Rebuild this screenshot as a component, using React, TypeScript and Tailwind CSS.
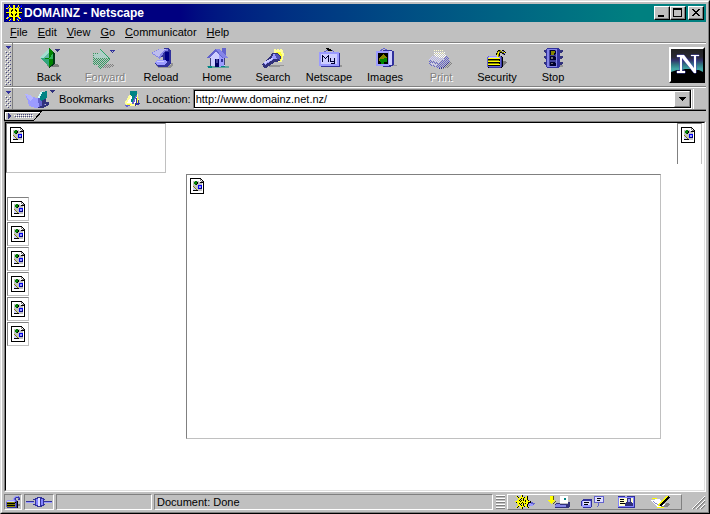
import type { ReactNode } from "react";

const colors: Record<string, string> = {
  k: "#000000",
  w: "#ffffff",
  g: "#c0c0c0",
  d: "#808080",
  b: "#0000ff",
  n: "#000080",
  v: "#008000",
  y: "#ffff00",
  o: "#848400",
  l: "#9c9cff",
  p: "#6363ce",
  i: "#31319c",
  t: "#008080",
  c: "#ceceff",
  e: "#319c63",
  m: "#9cdece",
  f: "#ffffce",
};

// Each character is one pixel, a dot is transparent
function Pixels({ rows }: { rows: string[] }) {
  return (
    <svg width={rows[0].length} height={rows.length} shapeRendering="crispEdges" className="block shrink-0" aria-hidden="true">
      {rows.flatMap((row, y) =>
        row.split("").map((c, x) =>
          colors[c] ? <rect key={`${x}-${y}`} x={x} y={y} width="1" height="1" fill={colors[c]} /> : null
        )
      )}
    </svg>
  );
}

const missingImage = [
  "kkkkkkkkkkk...",
  "kwwwwwwwwwdk..",
  "kwwwwwwwwwdwk.",
  "kwwggvvggwwddk",
  "kwwgvvvkggkkkk",
  "kwwgvvvkggggwk",
  "kwwggvkgggggwk",
  "kwwgggggbbbbwk",
  "kwwoggggbllbwk",
  "kwwcogggbllnwk",
  "kwwccoggbnnnwk",
  "kwwcccogggggwk",
  "kwwkkkkkggggwk",
  "kwwwwwwwwwwwwk",
  "kwwwwwwwwwwwwk",
  "kkkkkkkkkkkkkk",
];

const forward = [
  ".......e................",
  ".......me........iiiii..",
  "........me........i.i...",
  ".......m.me........i....",
  "e.e.e.m.m.me............",
  ".m.m.m.m.m.me...........",
  "e.m.m.m.m.m.me..........",
  ".m.m.m.m.m.m.me.........",
  "e.m.m.m.m.m.m.me........",
  ".e.e.e.e.e.e.e.ee.......",
  "e.e.e.e.e.e.e.e.e.......",
  ".e.e.e.e.e.e.e.e........",
  "e.e.e.e.e.e.e.e.........",
  ".e.e.e.e.e.e.e..........",
  "e.e.e.e.e.e.e...........",
  ".e.e.e.e.e.e.d.d.d.d....",
  "......e.e.e.d.d.d.d.d...",
  ".....e.e.e.d.d.d.d.d....",
  "......e.e.d.d.d.d.......",
  ".......e................",
];

const print = [
  ".....f.f.f.f.f..........",
  "........................",
  ".....w.w.w.w.f.w........",
  "......f.f.f.f.f.........",
  ".....w.w.w.w.w.w........",
  "......w.w.w.w.w.w.......",
  "...c.c.w.w.w.w.w.p......",
  "..c.c.c.c.w.w.w.p.p.....",
  ".c.c.c.c.c.c.c.p.p.p....",
  "c.c.c.c.c.c.c.c.p.p.....",
  ".p.c.c.c.c.c.p.p.p.p....",
  "p.p.p.c.c.c.p.p.p.p.p...",
  ".p.p.p.p.c.p.p.p.p.i.d..",
  "p.c.c.p.p.p.p.p.p.i.d.d.",
  ".p.c.c.c.p.p.p.p.i.d.d..",
  "..p.p.c.p.p.p.p.i.d.d...",
  ".....p.p.p.p.p.i.d.d....",
  "........p.p.i.i.d.d.....",
  "..........i.i.d.........",
];

const lock = [
  "...........kko.kk...",
  "..........koooo.pk..",
  "..........oypkkooyk.",
  ".........koyk..kkp..",
  ".........kyok...pk..",
  "..........yok.......",
  ".pllllllllyoppk.....",
  "plcccccccccclpik....",
  "pyyyyyyyyyyyypik....",
  "pkkkkkkkkkkkkpik....",
  "poooooooooookpik....",
  "pyyyyyyyyyyyypikddd.",
  "pkkkkkkkkkkkkpikdddd",
  "poooooooooookpikddd.",
  "pyyyyyyyyyyyypikdd..",
  "pkkkkkkkkkkkkpikd...",
  "ppppppppppppppik....",
  ".kiiiiiiiiiiiik.....",
];

const smallLock = [
  ".........lllp..",
  "........lpiiip.",
  ".......lpi..pi.",
  ".......lpi..ii.",
  ".llllllllpp....",
  "lccccccclpik...",
  "pooooooookik...",
  "pkkkkkkkkpik...",
  "poooooooopikdd.",
  "pkkkkkkkkpikdd.",
  "poooooooopik...",
  ".iiiiiiiiiik...",
];

const wheel = [
  "......yk............",
  ".yk...yk...yk.......",
  "..yk.yyyyk.yk.......",
  "...yyykykyyyk.......",
  "...yyk.yk.yyk.......",
  "..yykykykykyyk......",
  "yyyyykyyyykyyyyk....",
  ".kyyyyykyyyyykkkpp..",
  "..yykykykykyykllpppp",
  "...yyk.yk.yykpllllp.",
  "...yyykykyyyk.plll..",
  "..yk.yyyyk.yk.......",
  ".yk...yk....yk......",
  "......yk............",
];

const titleWheel = [
  "b..y...yy...y..b",
  "bb.yb..yy..by.bb",
  "..y.yb.yy.by.y..",
  "yybyyyyyyyyyyb.y",
  ".bbyyykyykyyybb.",
  "...yykkyykkyyk..",
  "..byykyyyykyyk..",
  "yyyyyyyyyyyyyyyy",
  "kkkyykyyyykyykkk",
  "..byykkyykkyyk..",
  "..byyykyykyyyb..",
  ".b.yyyyyyyyyy.b.",
  "byybkkkyykkbyyb.",
  "yybb.bkyyk.bbyyb",
  "kb..yb.yyk.yb.kb",
  "b..ybb.yyk.by..b",
];

function Icon({ w = 26, h = 22, children }: { w?: number; h?: number; children: ReactNode }) {
  return (
    <svg width={w} height={h} viewBox={`0 0 ${w} ${h}`} shapeRendering="crispEdges" className="block shrink-0" aria-hidden="true">
      {children}
    </svg>
  );
}

const BackIcon = () => (
  <Icon>
    <path d="M11 16h11v1h1v2H12z" fill="#808080" />
    <path d="m14 1 5 5v10l-6 4z" fill="#003918" />
    <path d="M13 0 4 10l9 9 4-3V4z" fill="#008400" />
    <path d="M13 0 4 10h9z" fill="#a5dece" />
    <path d="M13 4v6H7z" fill="#63b5a5" />
    <path d="m4 10 9 1v8z" fill="#31a57b" />
    <path d="M13 11h4v-6z" fill="#31b55a" />
    <path d="M19 1h5v1h-1v1h-1v1h-1V3h-1V2h-1z" fill="#31317b" />
  </Icon>
);

const ReloadIcon = () => (
  <Icon>
    <path d="M8 17h15v-2h2v3l-3 2H10z" fill="#949494" />
    <path d="M11 1 20 0l3 3v13l-4 3h-9l-4-4 4-3h5v-3h-5L3 5z" fill="#31319c" />
    <path d="M3 5 11 1h8l2 1-5 2-4 7z" fill="#8484e7" />
    <path d="M4 5 12 1h7l-5 3-3 5z" fill="#bdbdef" />
    <path d="M17 4h4v9h-4z" fill="#000084" />
    <path d="m7 14 3-2h7l2 2-2 3H9z" fill="#9c9cff" />
    <path d="M9 13h7v1H9z" fill="#ceceff" />
  </Icon>
);

const HomeIcon = () => (
  <Icon>
    <path d="M2 18h23v2H4z" fill="#63a59c" />
    <path d="M4 18h4v2H4zM17 18h4v1h-4z" fill="#008484" />
    <path d="M6 9 12 4l9 5v9H6z" fill="#ceceff" />
    <path d="m15 7 6 3v7l-6 2z" fill="#9c9cff" />
    <path d="M2 10 11 1l5 5 8 4h-5l-7-6-7 6z" fill="#6363ce" />
    <path d="M12 1h3l9 9h-5z" fill="#8484e7" />
    <path d="M18 0h4v7l-4-3z" fill="#6363ce" />
    <path d="M11 11h4v8h-4z" fill="#000063" />
    <path d="M12 11h2v4h-2z" fill="#42429c" />
    <path d="M17 11h2v3h-2z" fill="#31319c" />
    <path d="M6 10h1v8H6zM20 10h1v7h-1z" fill="#42427b" />
  </Icon>
);

const SearchIcon = () => (
  <Icon>
    <path d="M14 1h2v1h1V1h2v1h1V1h2v1h1v3h1v3h-1v4h-1v2h-7z" fill="#ffff9c" />
    <path d="M16 4h5v2h1v5h-1v2h-5z" fill="#ffff31" />
    <path d="M9 17h15v1h-4v1H9z" fill="#949494" />
    <path d="M2 16 10 9l2-4h6l3 4-1 4-5 1-9 6H4z" fill="#31317b" />
    <path d="m3 15 9-5 1-4 4 1 2 3-5 1-9 6z" fill="#9c9cff" />
    <path d="m4 14 8-4 1 1-8 5z" fill="#ceceff" />
    <path d="M15 6h3l2 3v3l-4-2z" fill="#5252b5" />
  </Icon>
);

const NetscapeIcon = () => (
  <Icon>
    <path d="m7 5 5-3h3l5 3" fill="none" stroke="#6363ce" />
    <path d="M10 0h3v1h2v1h1v1h-4V2h-1V1h-1z" fill="#000000" />
    <path d="M20 17h6v2h-6z" fill="#949494" />
    <path d="M4 5h20v14H5z" fill="#31319c" />
    <path d="M3 4h20v14H3z" fill="#9c9cff" />
    <path d="M5 6h16v10H5z" fill="#ceceff" />
    <path d="M6 14V7h1v1h1v1h1v1h1V9h1V8h1V7h1v7h-1V9h-1v1h-1v1H9v-1H8V9H7v5zM14 10h1v3h3v-3h1v6h-4v-1h3v-1h-4z" fill="#000031" />
  </Icon>
);

const ImagesIcon = () => (
  <Icon>
    <path d="m7 4 5-4 5 4" fill="none" stroke="#6363ce" />
    <path d="M9 18h16v-1h-3z" fill="#949494" />
    <path d="M4 3 18 2l4 1v14l-4 2-14-1z" fill="#31319c" />
    <path d="M4 3h13v15H4z" fill="#9c9cff" />
    <path d="M17 3h3v14h-3z" fill="#ceceff" />
    <path d="M6 5h10v11H6z" fill="#000000" />
    <path d="m7 10 4-4 4 4v3H7z" fill="#848400" />
    <path d="M8 11h4v-1h3v4h-3v2H9z" fill="#008400" />
  </Icon>
);

const StopIcon = () => (
  <Icon>
    <path d="M17 17h6v2h-6z" fill="#949494" />
    <path d="M4 2h19v2h-1v1h-2v2H7V5H5V4H4zM4 8h19v2h-1v1h-2v2H7v-2H5v-1H4zM4 14h19v2h-1v1h-2v2H7v-2H5v-1H4z" fill="#31317b" />
    <path d="M7 0h11l2 1v18l-2 1H8l-2-1V1z" fill="#31319c" />
    <path d="M7 1h10v18H7z" fill="#8484e7" />
    <path d="M9 2h7v16H9z" fill="#42429c" />
    <path d="M10 2h5v1h1v3h-1v1h-5zM10 8h5v1h1v3h-6zM10 14h5v1h1v3h-6z" fill="#000031" />
    <path d="M11 3h4v2h-1v2h-3z" fill="#848400" />
    <path d="M11 9h2v2h-2zM11 15h2v1h-2z" fill="#737373" />
  </Icon>
);

const BookmarksIcon = () => (
  <Icon w={30} h={20}>
    <path d="M13 16h8v-3h3v3l-6 3h-5z" fill="#31317b" />
    <path d="m0 5 6 1 1 2 6 1 1-1v10l-3 1-7-2-1-5z" fill="#9c9cff" />
    <path d="m0 5 6 1 1 2 2 1-4 3z" fill="#b5b5ff" />
    <path d="m13 9 3-3 5 2v7l-7 3z" fill="#6363ce" />
    <path d="m17 10h4v5l-4 1z" fill="#31317b" />
    <path d="m14 6 4-3 4-1v7l-6 3z" fill="#008484" />
    <path d="M13 7h1V5h1V3h2V2h1v1h-1v2h-1v2h-1v2h-2z" fill="#ceffff" />
    <path d="M25 1h5v1h-1v1h-1v1h-1V3h-1V2h-1z" fill="#31317b" />
  </Icon>
);

const LocationIcon = () => (
  <Icon w={18} h={18}>
    <path d="m1 12 5-8h8l1 9-3 3H2z" fill="#ffff9c" />
    <path d="m3 13 4-7 6 1-1 6z" fill="#ffffff" />
    <path d="M6 1h7v3l-2 6-3 3-1-1 1-6-2-1z" fill="#008484" />
    <path d="m8 13 4-8 1 1-4 9zM1 15h5v1l-4 1z" fill="#6363ce" />
    <path d="m13 5 3 9-5 2z" fill="#31319c" />
    <path d="M13 7h1v6h-1zM3 14h4v1H3z" fill="#ffff31" />
  </Icon>
);

const MailIcon = () => (
  <Icon w={24} h={14}>
    <path d="M3 1h3v4h2v1H7v1H6v1H5v1H4V8H3V7H2V6H1V5h2z" fill="#ffff00" />
    <path d="M6 1h1v4H6zM8 6h1v1H8zM7 7h1v1H7zM6 8h1v1H6z" fill="#636300" />
    <path d="M13 1h8v7h-8z" fill="#ffffff" />
    <path d="M17 3h2v2h-2z" fill="#008484" />
    <path d="M9 8h4v1h8V7h2v4l-2 2H8v-3z" fill="#31317b" />
    <path d="M9 9h4v1h6v2H8z" fill="#8484e7" />
  </Icon>
);

const ChatIcon = () => (
  <Icon w={24} h={14}>
    <path d="M2 4h9v7l-2 2H2l-2-2V6z" fill="#31319c" />
    <path d="M1 6h9v6H1z" fill="#9c9cff" />
    <path d="M2 6h7v4H2zM14 2h8v5h-8z" fill="#dedeff" />
    <path d="M13 1h10v7h-5v3h-1v1h-1v-1h1V8h-4zm1 1v5h8V2z" fill="#6363ce" fillRule="evenodd" />
    <path d="M3 7h5v1H3zM3 9h4v1H3zM16 3h4v1h-4zM16 5h3v1h-3z" fill="#000000" />
  </Icon>
);

const AddressIcon = () => (
  <Icon w={18} h={14}>
    <path d="M0 1h7v1h2V1h8v12H0z" fill="#31319c" />
    <path d="M0 2h16v10H0z" fill="#8484ff" />
    <path d="M1 3h14v8H1z" fill="#ffffce" />
    <path d="M2 4h4v1H2zM2 6h4v1H2zM2 8h5v1H2z" fill="#000000" />
    <path d="M9 3h4v4h1v1h1v3H7V8h1V7h1z" fill="#31317b" />
    <path d="M10 4h2v3h-2z" fill="#9c9cff" />
  </Icon>
);

const ComposerIcon = () => (
  <Icon w={20} h={14}>
    <path d="M9 12h8l2-3-3-1z" fill="#808080" />
    <path d="m0 5 8-1 6 6-7 3z" fill="#ffffff" />
    <path d="m2 6 5 3 5-2v3l-4 1-6-4z" fill="#8484ce" />
    <path d="m9 9 8-8 2 1-7 8-3 1z" fill="#000000" />
    <path d="M7 9 15 1h2L9 10l-2 1zM1 3h5v1H1zM6 12h7v1H6z" fill="#ffff00" />
  </Icon>
);

const PlugIcon = () => (
  <Icon w={26} h={12}>
    <path d="M0 5h8v1H0zM18 5h8v1h-8z" fill="#31319c" />
    <path d="M0 6h8v1H0zM18 6h8v1h-8z" fill="#9c9cff" />
    <path d="M7 3h3v1H7zM7 8h3v1H7zM16 3h3v1h-3zM16 8h3v1h-3z" fill="#31319c" />
    <path d="M9 2h2V1h5v1h2v8h-2v1h-5v-1H9z" fill="#31319c" />
    <path d="M10 3h2v6h-2zM15 3h2v6h-2z" fill="#8484ff" />
    <path d="M12 2h2v8h-2z" fill="#dedeff" />
  </Icon>
);

const NetscapeMark = () => (
  <svg width="32" height="32" viewBox="0 0 32 32" className="block" aria-hidden="true">
    <defs>
      <linearGradient id="sky" x1="0" y1="0" x2="0" y2="1">
        <stop offset="0" stopColor="#212121" />
        <stop offset="0.25" stopColor="#292931" />
        <stop offset="0.35" stopColor="#31316b" />
        <stop offset="0.5" stopColor="#317b84" />
        <stop offset="0.62" stopColor="#42a5a5" />
        <stop offset="1" stopColor="#52bdb5" />
      </linearGradient>
    </defs>
    <path d="M0 0h32v32H0z" fill="url(#sky)" />
    <path d="M0 23 6 21h5l3-1h6l3 1h5l4 2v9H0z" fill="#000000" />
    <path
      d="M6 6h7l10 13V7h-3V6h8v1h-3v17h-2L11 9v13h3v2H6v-2h3V8H6z"
      fill="#ffffff"
      stroke="#4a4ab5"
      strokeWidth="1"
      paintOrder="stroke"
    />
  </svg>
);

const raised = "border border-t-white border-l-white border-r-[#808080] border-b-[#808080]";
const sunken = "border border-t-[#808080] border-l-[#808080] border-r-white border-b-white";

const menus = ["File", "Edit", "View", "Go", "Communicator", "Help"];

const tools = [
  { label: "Back", icon: <BackIcon /> },
  { label: "Forward", icon: <Pixels rows={forward} />, disabled: true },
  { label: "Reload", icon: <ReloadIcon /> },
  { label: "Home", icon: <HomeIcon /> },
  { label: "Search", icon: <SearchIcon /> },
  { label: "Netscape", icon: <NetscapeIcon /> },
  { label: "Images", icon: <ImagesIcon /> },
  { label: "Print", icon: <Pixels rows={print} />, disabled: true },
  { label: "Security", icon: <Pixels rows={lock} /> },
  { label: "Stop", icon: <StopIcon /> },
];

const components = [
  { label: "Navigator", icon: <Pixels rows={wheel} /> },
  { label: "Inbox", icon: <MailIcon /> },
  { label: "Newsgroups", icon: <ChatIcon /> },
  { label: "Address Book", icon: <AddressIcon /> },
  { label: "Composer", icon: <ComposerIcon /> },
];

function Grip({ h }: { h: number }) {
  return (
    <button aria-label="Collapse toolbar" className="flex w-[9px] shrink-0 flex-col items-center gap-[2px] self-stretch border-r border-[#808080] pt-[3px]">
      <Pixels rows={["iiiii", ".iii.", "..i.."]} />
      <svg width="6" height={h} shapeRendering="crispEdges" aria-hidden="true">
        <defs>
          <pattern id={`grip${h}`} width="4" height="4" patternUnits="userSpaceOnUse">
            <path d="M0 0h1v1h-1zM2 2h1v1h-1z" fill="#ffffff" />
            <path d="M1 1h1v1h-1zM3 3h1v1h-1z" fill="#42427b" />
          </pattern>
        </defs>
        <rect width="6" height={h} fill={`url(#grip${h})`} />
      </svg>
    </button>
  );
}

function CaptionButton({ label, children }: { label: string; children: ReactNode }) {
  return (
    <button
      aria-label={label}
      className="flex h-[14px] w-4 items-center justify-center border border-t-white border-l-white border-r-black border-b-black bg-[#c0c0c0] shadow-[inset_-1px_-1px_#808080]"
    >
      <svg width="10" height="10" viewBox="0 0 10 10" shapeRendering="crispEdges" aria-hidden="true">
        {children}
      </svg>
    </button>
  );
}

function Missing({ className, label }: { className: string; label: string }) {
  return (
    <div role="img" aria-label={label} className={`border border-t-[#808080] border-l-[#808080] border-r-[#c0c0c0] border-b-[#c0c0c0] p-[3px] ${className}`}>
      <Pixels rows={missingImage} />
    </div>
  );
}

export default function App() {
  return (
    <div className="flex min-h-screen flex-col border border-t-[#dfdfdf] border-l-[#dfdfdf] border-r-black border-b-black bg-[#c0c0c0] font-['Liberation_Sans',Arial,sans-serif] text-[11px] leading-[14px] text-black">
      <div className="flex flex-1 flex-col border border-t-white border-l-white border-r-[#808080] border-b-[#808080] px-[2px] pt-[2px]">
        {/* Title bar */}
        <header className="flex h-[18px] items-center bg-linear-to-r from-[#000080] from-25% to-[#008080] to-90% px-[2px]">
          <Pixels rows={titleWheel} />
          <h1 className="ml-[2px] flex-1 text-[12px] font-bold text-white">DOMAINZ - Netscape</h1>
          <div className="flex">
            <CaptionButton label="Minimize">
              <path d="M1 7h6v2H1z" />
            </CaptionButton>
            <CaptionButton label="Maximize">
              <path d="M0 0h9v9H0zM1 2v6h7V2z" fillRule="evenodd" />
            </CaptionButton>
            <div className="ml-[2px] flex">
              <CaptionButton label="Close">
                <path d="M1 1h2v1h1v1h2V2h1V1h2v1H8v1H7v1H6v1h1v1h1v1h1v1H7V7H6V6H4v1H3v1H1V7h1V6h1V5h1V4H3V3H2V2H1z" />
              </CaptionButton>
            </div>
          </div>
        </header>

        <nav className="flex h-5 items-center gap-[10px] pl-[6px]">
          {menus.map((m) => (
            <button key={m}>
              <span className="underline underline-offset-1">{m[0]}</span>
              {m.slice(1)}
            </button>
          ))}
        </nav>

        {/* Navigation toolbar */}
        <div className="flex h-[45px] items-center border-t border-b border-t-[#808080] border-b-[#808080] shadow-[inset_0_1px_#ffffff]">
          <Grip h={34} />
          <div className="flex flex-1 pt-[3px] pl-2">
            {tools.map((t) => (
              <button key={t.label} disabled={t.disabled} className="flex w-14 flex-col items-center">
                <span className="flex h-[22px] items-center">{t.icon}</span>
                <span className={t.disabled ? "text-[#808080] [text-shadow:1px_1px_#ffffff]" : ""}>{t.label}</span>
              </button>
            ))}
          </div>
          <a href="#" aria-label="Netscape home" className="mr-px border-2 border-t-white border-l-white border-r-black border-b-black">
            <NetscapeMark />
          </a>
        </div>

        {/* Location toolbar */}
        <div className="flex h-[24px] items-center border-t border-b border-t-white border-b-black shadow-[inset_0_-1px_#808080]">
          <Grip h={12} />
          <button className="ml-3 flex items-center gap-[4px]">
            <BookmarksIcon />
            Bookmarks
          </button>
          <label htmlFor="location" className="ml-[10px] flex items-center gap-1">
            <LocationIcon />
            Location:
          </label>
          <div className="ml-[2px] flex h-5 flex-1 border border-t-[#808080] border-l-[#808080] border-r-white border-b-white">
            <div className="flex flex-1 border border-black bg-white">
              <input id="location" defaultValue="http://www.domainz.net.nz/" className="min-w-0 flex-1 bg-white pl-px outline-none" />
              <button
                aria-label="Show history"
                className="flex w-4 items-center justify-center border border-t-white border-l-white border-r-[#808080] border-b-[#808080] bg-[#c0c0c0]"
              >
                <Pixels rows={["kkkkkkk", ".kkkkk.", "..kkk..", "...k..."]} />
              </button>
            </div>
          </div>
          <div className="mr-3 ml-px h-5 border-r border-white" />
        </div>

        {/* Collapsed personal toolbar */}
        <div className="flex h-[10px]">
          <button aria-label="Show personal toolbar">
            <svg width="40" height="10" shapeRendering="crispEdges" className="block" aria-hidden="true">
              <path d="M0 0h38l-8 9H0z" fill="#c0c0c0" stroke="#000000" />
              <path d="M1 1h35v1H2v6H1z" fill="#ffffff" />
              <path d="M4 2v6l3-3z" fill="#31317b" />
              <path d="M10 4h20M12 6h17" stroke="#ffffff" strokeDasharray="1 1" />
              <path d="M11 5h18M13 3h16" stroke="#42427b" strokeDasharray="1 1" />
            </svg>
          </button>
        </div>

        {/* Page */}
        <main className="flex flex-1 flex-col border border-t-[#808080] border-l-[#808080] border-r-white border-b-white">
          <div className="flex-1 border border-t-black border-l-black border-r-[#dfdfdf] border-b-[#dfdfdf] bg-white">
            <div className="flex items-start justify-between pr-[2px]">
              <Missing label="Domainz" className="h-[50px] w-40" />
              <Missing label="Top right" className="h-[41px] w-[25px] border-b-0" />
            </div>
            <div className="flex items-start">
              <div className="flex w-[180px] shrink-0 flex-col gap-px pt-6 pl-px">
                {["Menu 1", "Menu 2", "Menu 3", "Menu 4", "Menu 5", "Menu 6"].map((m) => (
                  <a key={m} href="#" className="w-[22px]">
                    <Missing label={m} className="h-6" />
                  </a>
                ))}
              </div>
              <Missing label="Welcome" className="mt-px mr-[43px] h-[265px] flex-1" />
            </div>
          </div>
        </main>

        {/* Status bar */}
        <footer className="flex h-5 items-center gap-[2px] pb-px">
          <button aria-label="Security" className={`flex h-4 w-[18px] items-center justify-center ${sunken}`}>
            <Pixels rows={smallLock} />
          </button>
          <div className={`flex h-4 w-[30px] items-center justify-center ${sunken}`}>
            <PlugIcon />
          </div>
          <div className={`h-4 w-24 ${sunken}`} />
          <div className={`flex h-4 flex-1 items-center pl-[2px] ${sunken}`}>Document: Done</div>
          <div className="ml-px flex h-4 w-[9px] flex-col justify-between py-px">
            {[1, 2, 3, 4, 5].map((n) => (
              <div key={n} className="h-[2px] border-t border-b border-t-white border-b-[#808080]" />
            ))}
          </div>
          <div className={`flex h-4 w-[175px] items-center ${raised}`}>
            {components.map((c) => (
              <button key={c.label} aria-label={c.label} className="flex w-[34px] justify-center">
                {c.icon}
              </button>
            ))}
          </div>
          <svg width="22" height="16" aria-hidden="true">
            <path d="M9 15 21 3M13 15l8-8M17 15l4-4" stroke="#808080" strokeWidth="1.5" />
            <path d="M8 15 21 2M12 15l9-9M16 15l5-5" stroke="#ffffff" />
          </svg>
        </footer>
      </div>
    </div>
  );
}
